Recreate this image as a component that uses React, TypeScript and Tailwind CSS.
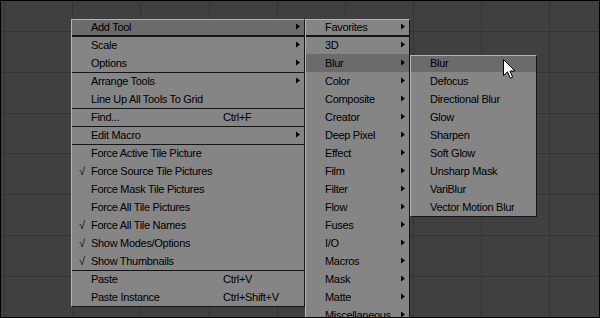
import React from "react";

type Item = {
  label: string;
  check?: boolean;
  arrow?: boolean;
  shortcut?: string;
  sep?: boolean; // separator above this row
  hi?: boolean;
};

const menu1: Item[] = [
  { label: "Add Tool", arrow: true, hi: true },
  { label: "Scale", arrow: true, sep: true },
  { label: "Options", arrow: true },
  { label: "Arrange Tools", arrow: true, sep: true },
  { label: "Line Up All Tools To Grid" },
  { label: "Find...", shortcut: "Ctrl+F", sep: true },
  { label: "Edit Macro", arrow: true, sep: true },
  { label: "Force Active Tile Picture", sep: true },
  { label: "Force Source Tile Pictures", check: true },
  { label: "Force Mask Tile Pictures" },
  { label: "Force All Tile Pictures" },
  { label: "Force All Tile Names", check: true },
  { label: "Show Modes/Options", check: true },
  { label: "Show Thumbnails", check: true },
  { label: "Paste", shortcut: "Ctrl+V", sep: true },
  { label: "Paste Instance", shortcut: "Ctrl+Shift+V" },
];

const menu2: Item[] = [
  { label: "Favorites", arrow: true },
  { label: "3D", arrow: true, sep: true },
  { label: "Blur", arrow: true, hi: true },
  { label: "Color", arrow: true },
  { label: "Composite", arrow: true },
  { label: "Creator", arrow: true },
  { label: "Deep Pixel", arrow: true },
  { label: "Effect", arrow: true },
  { label: "Film", arrow: true },
  { label: "Filter", arrow: true },
  { label: "Flow", arrow: true },
  { label: "Fuses", arrow: true },
  { label: "I/O", arrow: true },
  { label: "Macros", arrow: true },
  { label: "Mask", arrow: true },
  { label: "Matte", arrow: true },
  { label: "Miscellaneous", arrow: true },
];

const menu3: Item[] = [
  { label: "Blur", hi: true },
  { label: "Defocus" },
  { label: "Directional Blur" },
  { label: "Glow" },
  { label: "Sharpen" },
  { label: "Soft Glow" },
  { label: "Unsharp Mask" },
  { label: "VariBlur" },
  { label: "Vector Motion Blur" },
];

function Arrow({ top }: { top: string }) {
  return (
    <svg
      width="4"
      height="7"
      viewBox="0 0 4 7"
      className={`absolute right-[4px] ${top}`}
    >
      <polygon points="0,0.5 4,3.5 0,6.5" fill="#000" />
    </svg>
  );
}

function Row({
  item,
  first,
  sepBelow,
  withCheck,
}: {
  item: Item;
  first: boolean;
  sepBelow: boolean;
  withCheck: boolean;
}) {
  let cls = "relative flex items-start ";
  let lead = "";
  let arrowTop = "";
  if (first) {
    cls += "h-[16px] ";
    lead = "leading-[14px]";
    arrowTop = "top-[3px]";
    if (sepBelow) cls += "border-b border-[#141414] ";
  } else if (item.sep) {
    cls += "h-[18px] border-t border-[#141414] ";
    lead = "leading-[16px]";
    arrowTop = "top-[4px]";
  } else {
    cls += "h-[18px] ";
    lead = "leading-[18px]";
    arrowTop = "top-[5px]";
  }
  cls += item.hi ? "bg-[#6b6b6b] " : "";
  cls += withCheck ? "pl-[7px]" : "pl-[19px]";
  return (
    <div className={cls}>
      {withCheck && (
        <span className={`w-[12px] ${lead}`}>{item.check ? "√" : ""}</span>
      )}
      <span
        className={`${lead} whitespace-nowrap ${item.shortcut ? "w-[132px]" : ""}`}
      >
        {item.label}
      </span>
      {item.shortcut && (
        <span className={`${lead} whitespace-nowrap`}>{item.shortcut}</span>
      )}
      {item.arrow && <Arrow top={arrowTop} />}
    </div>
  );
}

function Menu({
  items,
  className,
  withCheck = false,
}: {
  items: Item[];
  className: string;
  withCheck?: boolean;
}) {
  return (
    <div
      className={`absolute flex flex-col bg-[#858585] border-t border-l border-[#b4b4b4] border-r-[#141414] border-b-[#141414] ${className}`}
    >
      {items.map((it, i) => (
        <Row
          key={it.label + i}
          item={it}
          first={i === 0}
          sepBelow={i === 0 && !!items[1]?.sep}
          withCheck={withCheck}
        />
      ))}
    </div>
  );
}

const vLines = [4, 72, 140, 209, 277, 345, 413, 481, 549];
const hLines = [31, 72, 113, 153, 194, 235, 276];

export default function App() {
  return (
    <div className="relative w-[600px] h-[318px] overflow-hidden bg-[#404040] font-['Liberation_Sans',Arial,sans-serif] text-[11px] tracking-[-0.3px] text-black">
      <svg className="absolute inset-0" width="600" height="318">
        {vLines.map((x) => (
          <rect key={"v" + x} x={x} y={0} width={1} height={318} fill="#343434" />
        ))}
        {hLines.map((y) => (
          <rect key={"h" + y} x={0} y={y} width={600} height={1} fill="#343434" />
        ))}
      </svg>

      <Menu
        items={menu1}
        withCheck
        className="left-[71px] top-[19px] w-[234px] border-r border-b"
      />
      <Menu
        items={menu2}
        className="left-[305px] top-[19px] w-[105px] border-r"
      />
      <Menu
        items={menu3}
        className="left-[410px] top-[55px] w-[127px] border-r border-b"
      />

      <svg
        className="absolute left-[503px] top-[59px]"
        width="13"
        height="21"
        viewBox="0 0 13 21"
      >
        <path
          d="M0.5 0.5 V16.5 L4.5 12.8 L7.2 19.2 L9.6 18.2 L7 12 H12 Z"
          fill="#fff"
          stroke="#000"
          strokeWidth="1"
          strokeLinejoin="miter"
        />
      </svg>

      <div className="absolute inset-0 border border-black pointer-events-none" />
    </div>
  );
}
